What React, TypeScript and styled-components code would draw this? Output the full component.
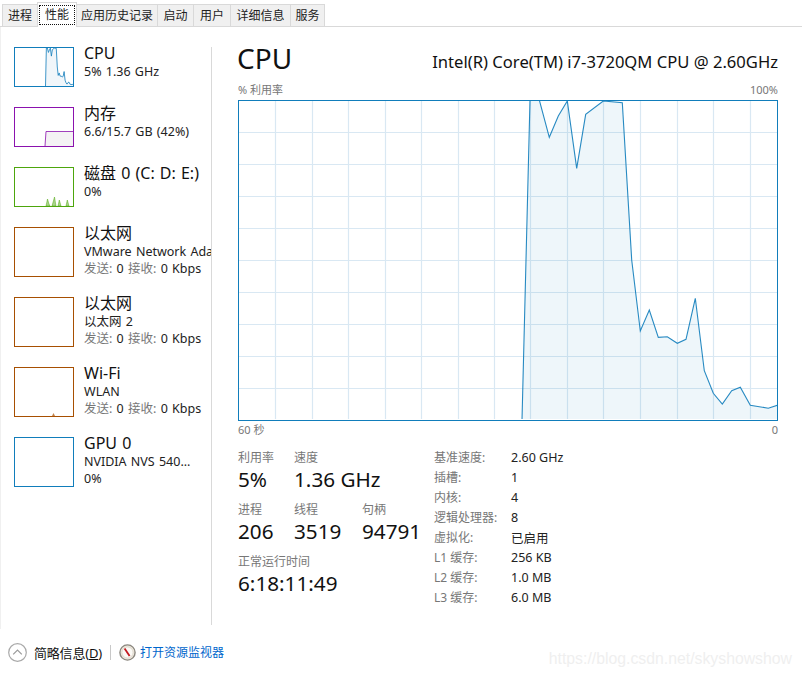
import styled, { createGlobalStyle } from "styled-components";

const FONT = `"Noto Sans", "Noto Sans CJK SC", sans-serif`;

const GlobalStyle = createGlobalStyle`
  html, body {
    margin: 0;
    padding: 0;
    background: #fff;
  }
  body {
    font-family: ${FONT};
    color: #111;
  }
`;

const CPU_POINTS: [number, number][] = [
  [522, 420], [530, 100], [539.3, 100], [549.3, 137.3], [558.3, 116], [567.3, 101],
  [576.7, 168.3], [585.7, 114.3], [603.3, 101], [622.3, 102.7], [631.7, 260], [640.3, 331],
  [649.3, 310], [658.3, 337.3], [667.3, 336.7], [677.3, 343.3], [686, 339.3], [695.3, 298.3],
  [704.3, 370.7], [713.3, 393.3], [722.3, 404], [731.7, 390.7], [740.3, 387.3], [750.3, 405.3],
  [759.3, 406.7], [768.3, 408.3], [777.3, 405.3],
];

const V_GRID = [275, 312, 348, 385, 421, 458, 494, 530, 567, 603, 640, 677, 713, 750];
const H_GRID = [132, 164, 196, 228, 260, 292, 324, 356, 388];

const TABS: [string, number][] = [
  ["进程", 36],
  ["性能", 40],
  ["应用历史记录", 82],
  ["启动", 37],
  ["用户", 38],
  ["详细信息", 61],
  ["服务", 35],
];

const toPoints = (pts: [number, number][]) => pts.map(([x, y]) => `${x},${y}`).join(" ");

const CpuChart = () => {
  const local: [number, number][] = CPU_POINTS.map(([x, y]) => [x - 239, y - 101]);
  const area: [number, number][] = [...local, [538.5, 319]];
  return (
    <svg width="538" height="318" viewBox="0 0 538 318">
      {V_GRID.map((x) => (
        <line key={x} x1={x - 238.5} x2={x - 238.5} y1={0} y2={318} stroke="#d9e8f3" strokeWidth={1.2} />
      ))}
      {H_GRID.map((y) => (
        <line key={y} y1={y - 100.5} y2={y - 100.5} x1={0} x2={538} stroke="#d9e8f3" strokeWidth={1.2} />
      ))}
      <polygon points={toPoints(area)} fill="#117dbb" fillOpacity={0.07} />
      <polyline points={toPoints(local)} fill="none" stroke="#117dbb" strokeOpacity={0.9} strokeWidth={1.1} />
    </svg>
  );
};

const MiniCpu = () => {
  const pts: [number, number][] = CPU_POINTS.map(([x, y]) => [
    ((x - 238) / 540) * 58,
    ((y - 100) / 320) * 38,
  ]);
  return (
    <svg width="58" height="38" viewBox="0 0 58 38">
      <polygon points={toPoints([...pts, [58, 38]])} fill="#f1f6fa" />
      <polyline points={toPoints(pts)} fill="none" stroke="#117dbb" strokeOpacity={0.8} strokeWidth={1} />
    </svg>
  );
};

const MiniMemory = () => (
  <svg width="58" height="38" viewBox="0 0 58 38">
    <polygon points="30,38 31,23.5 58,23.5 58,38" fill="#f4f2f4" />
    <polyline points="30,38 31,23.5 58,23.5" fill="none" stroke="#8b12ae" strokeOpacity={0.8} />
  </svg>
);

const DISK_SPIKES = [
  "31,38 32.5,31 34,36 35,38",
  "37,38 39.5,29 41,38",
  "43,38 44.3,32 46,38",
  "51,38 52.3,32 54,38",
];

const MiniDisk = () => (
  <svg width="58" height="38" viewBox="0 0 58 38">
    {DISK_SPIKES.map((p) => (
      <polygon key={p} points={p} fill="#a9d48b" stroke="#4da60c" strokeOpacity={0.6} strokeWidth={0.8} />
    ))}
  </svg>
);

const MiniWifi = () => (
  <svg width="58" height="48" viewBox="0 0 58 48">
    <polygon points="37,48 38.5,45 40,48" fill="#a74f01" fillOpacity={0.7} />
  </svg>
);

const ChevronIcon = () => (
  <svg width="19" height="19" viewBox="0 0 19 19">
    <circle cx="9.5" cy="9.5" r="8.8" fill="#fff" stroke="#a9a9a9" strokeWidth="1.2" />
    <polyline points="5.2,11.3 9.5,7 13.8,11.3" fill="none" stroke="#9a9a9a" strokeWidth="1.2" />
  </svg>
);

const GaugeIcon = () => (
  <svg width="17" height="17" viewBox="0 0 17 17">
    <circle cx="8.5" cy="8.5" r="7.6" fill="#efeade" stroke="#8a867e" strokeWidth="1.4" />
    <circle cx="8.5" cy="8.5" r="5.6" fill="#fbfaf6" stroke="#d8d2c6" strokeWidth="0.8" />
    <line x1="5.6" y1="4.4" x2="10.6" y2="12" stroke="#c3191f" strokeWidth="1.8" />
  </svg>
);

const INFO_ROWS: [string, string][] = [
  ["基准速度:", "2.60 GHz"],
  ["插槽:", "1"],
  ["内核:", "4"],
  ["逻辑处理器:", "8"],
  ["虚拟化:", "已启用"],
  ["L1 缓存:", "256 KB"],
  ["L2 缓存:", "1.0 MB"],
  ["L3 缓存:", "6.0 MB"],
];

const App = () => {
  return (
    <>
      <GlobalStyle />
      <Window>
        <TabBar>
          {TABS.map(([t, w], i) => (
            <Tab key={t} $active={i === 1} $width={w}>
              <TabLabel $active={i === 1}>{t}</TabLabel>
            </Tab>
          ))}
        </TabBar>
        <Body>
          <Sidebar>
            <Device>
              <Thumb $color="#117dbb"><MiniCpu /></Thumb>
              <DeviceText>
                <DeviceName>CPU</DeviceName>
                <DeviceLine>5% 1.36 GHz</DeviceLine>
              </DeviceText>
            </Device>
            <Device>
              <Thumb $color="#8b12ae"><MiniMemory /></Thumb>
              <DeviceText>
                <DeviceName>内存</DeviceName>
                <DeviceLine>6.6/15.7 GB (42%)</DeviceLine>
              </DeviceText>
            </Device>
            <Device>
              <Thumb $color="#4da60c"><MiniDisk /></Thumb>
              <DeviceText>
                <DeviceName>磁盘 0 (C: D: E:)</DeviceName>
                <DeviceLine>0%</DeviceLine>
              </DeviceText>
            </Device>
            <Device>
              <Thumb $color="#a74f01" $tall />
              <DeviceText>
                <DeviceName>以太网</DeviceName>
                <DeviceLine>VMware Network Adapter VMnet1</DeviceLine>
                <DeviceLine><Dim>发送:</Dim> 0 <Dim>接收:</Dim> 0 Kbps</DeviceLine>
              </DeviceText>
            </Device>
            <Device>
              <Thumb $color="#a74f01" $tall />
              <DeviceText>
                <DeviceName>以太网</DeviceName>
                <DeviceLine>以太网 2</DeviceLine>
                <DeviceLine><Dim>发送:</Dim> 0 <Dim>接收:</Dim> 0 Kbps</DeviceLine>
              </DeviceText>
            </Device>
            <Device>
              <Thumb $color="#a74f01" $tall><MiniWifi /></Thumb>
              <DeviceText>
                <DeviceName>Wi-Fi</DeviceName>
                <DeviceLine>WLAN</DeviceLine>
                <DeviceLine><Dim>发送:</Dim> 0 <Dim>接收:</Dim> 0 Kbps</DeviceLine>
              </DeviceText>
            </Device>
            <Device>
              <Thumb $color="#117dbb" $tall />
              <DeviceText>
                <DeviceName>GPU 0</DeviceName>
                <DeviceLine>NVIDIA NVS 540...</DeviceLine>
                <DeviceLine>0%</DeviceLine>
              </DeviceText>
            </Device>
          </Sidebar>
          <Content>
            <TitleRow>
              <Title>CPU</Title>
              <Model>Intel(R) Core(TM) i7-3720QM CPU @ 2.60GHz</Model>
            </TitleRow>
            <AxisRow>
              <span>% 利用率</span>
              <span>100%</span>
            </AxisRow>
            <ChartFrame><CpuChart /></ChartFrame>
            <AxisRow>
              <span>60 秒</span>
              <span>0</span>
            </AxisRow>
            <Stats>
              <StatsLeft>
                <StatRow>
                  <Stat $width={56}><StatLabel>利用率</StatLabel><StatValue>5%</StatValue></Stat>
                  <Stat><StatLabel>速度</StatLabel><StatValue>1.36 GHz</StatValue></Stat>
                </StatRow>
                <StatRow>
                  <Stat $width={56}><StatLabel>进程</StatLabel><StatValue>206</StatValue></Stat>
                  <Stat $width={68}><StatLabel>线程</StatLabel><StatValue>3519</StatValue></Stat>
                  <Stat><StatLabel>句柄</StatLabel><StatValue>94791</StatValue></Stat>
                </StatRow>
                <StatRow>
                  <Stat><StatLabel>正常运行时间</StatLabel><StatValue>6:18:11:49</StatValue></Stat>
                </StatRow>
              </StatsLeft>
              <InfoTable>
                {INFO_ROWS.map(([k, v]) => (
                  <InfoRow key={k}>
                    <InfoKey>{k}</InfoKey>
                    <span>{v}</span>
                  </InfoRow>
                ))}
              </InfoTable>
            </Stats>
          </Content>
        </Body>
        <Footer>
          <ChevronIcon />
          <FooterLabel>简略信息(<u>D</u>)</FooterLabel>
          <FooterSep />
          <GaugeIcon />
          <FooterLink>打开资源监视器</FooterLink>
          <Watermark>https://blog.csdn.net/skyshowshow</Watermark>
        </Footer>
      </Window>
    </>
  );
};

const Window = styled.div`
  width: 802px;
  height: 677px;
  display: flex;
  flex-direction: column;
  overflow: hidden;
`;

const TabBar = styled.div`
  height: 26px;
  padding-left: 2px;
  display: flex;
  align-items: flex-end;
  border-bottom: 1px solid #d9d9d9;
`;

const Tab = styled.div<{ $active?: boolean; $width: number }>`
  box-sizing: border-box;
  flex: none;
  width: ${(p) => p.$width}px;
  height: ${(p) => (p.$active ? "25px" : "22px")};
  margin-bottom: ${(p) => (p.$active ? "-1px" : "0")};
  margin-right: -1px;
  display: flex;
  align-items: center;
  justify-content: center;
  font-size: 12px;
  color: #222;
  background: ${(p) => (p.$active ? "#fff" : "#f0f0f0")};
  border: 1px solid #d9d9d9;
  border-bottom: none;
  position: relative;
  z-index: ${(p) => (p.$active ? 1 : 0)};
`;

const TabLabel = styled.span<{ $active?: boolean }>`
  padding: 0 ${(p) => (p.$active ? "5px" : "0")};
  line-height: 18px;
  outline: ${(p) => (p.$active ? "1px dotted #111" : "none")};
`;

const Body = styled.div`
  height: 602px;
  display: flex;
`;

const Sidebar = styled.aside`
  box-sizing: border-box;
  width: 212px;
  padding: 20px 0 0 13px;
  display: flex;
  flex-direction: column;
  gap: 20px;
  border-left: 1px solid #f0f0f0;
  position: relative;
  overflow: hidden;
  &::after {
    content: "";
    position: absolute;
    right: 0;
    top: 20px;
    bottom: 4px;
    width: 1px;
    background: #d9d9d9;
  }
`;

const Device = styled.div`
  display: flex;
  gap: 10px;
  white-space: nowrap;
`;

const Thumb = styled.div<{ $color: string; $tall?: boolean }>`
  box-sizing: border-box;
  flex: none;
  width: 60px;
  height: ${(p) => (p.$tall ? "50px" : "40px")};
  border: 1px solid ${(p) => p.$color};
  display: flex;
  svg {
    display: block;
  }
`;

const DeviceText = styled.div`
  margin-top: -4px;
  min-width: 0;
`;

const DeviceName = styled.div`
  font-size: 16px;
  line-height: 20px;
  word-spacing: 1px;
  color: #111;
`;

const DeviceLine = styled.div`
  font-size: 12.5px;
  line-height: 17px;
  word-spacing: 1px;
  color: #222;
`;

const Dim = styled.span`
  color: #777;
`;

const Content = styled.main`
  flex: 1;
  padding: 16px 24px 0 26px;
  min-width: 0;
`;

const TitleRow = styled.div`
  height: 38px;
  display: flex;
  justify-content: space-between;
  align-items: flex-start;
`;

const Title = styled.div`
  font-size: 28px;
  line-height: 30px;
  margin-left: -1px;
  color: #111;
`;

const Model = styled.div`
  margin-top: 9px;
  font-size: 16.6px;
  line-height: 20px;
  color: #111;
`;

const AxisRow = styled.div`
  display: flex;
  justify-content: space-between;
  font-size: 11px;
  line-height: 17px;
  height: 19px;
  color: #777;
`;

const ChartFrame = styled.div`
  box-sizing: border-box;
  width: 540px;
  height: 321px;
  border: 1px solid #117dbb;
  svg {
    display: block;
  }
`;

const Stats = styled.div`
  margin-top: 7px;
  display: flex;
`;

const StatsLeft = styled.div`
  width: 196px;
  padding-top: 2px;
  display: flex;
  flex-direction: column;
  gap: 8px;
`;

const StatRow = styled.div`
  display: flex;
`;

const Stat = styled.div<{ $width?: number }>`
  width: ${(p) => (p.$width ? `${p.$width}px` : "auto")};
  white-space: nowrap;
`;

const StatLabel = styled.div`
  font-size: 12px;
  line-height: 18px;
  margin-bottom: -1px;
  color: #777;
`;

const StatValue = styled.div`
  font-size: 20.7px;
  line-height: 27px;
  color: #111;
`;

const InfoTable = styled.div`
  display: flex;
  flex-direction: column;
`;

const InfoRow = styled.div`
  height: 20px;
  display: flex;
  align-items: center;
  font-size: 12.5px;
  color: #222;
`;

const InfoKey = styled.span`
  width: 77px;
  font-size: 12px;
  color: #777;
`;

const Footer = styled.footer`
  flex: 1;
  padding: 0 0 2px 8px;
  display: flex;
  align-items: center;
  position: relative;
`;

const FooterLabel = styled.span`
  margin-left: 7px;
  font-size: 13px;
  letter-spacing: -0.2px;
  color: #111;
`;

const FooterSep = styled.span`
  width: 1px;
  height: 15px;
  margin: 0 8px 0 8px;
  background: #c8c8c8;
`;

const FooterLink = styled.a`
  margin-left: 4px;
  font-size: 12px;
  color: #0066cc;
`;

const Watermark = styled.span`
  position: absolute;
  right: 10px;
  top: 21px;
  font-family: "Liberation Sans", sans-serif;
  font-size: 15.8px;
  color: #efefef;
`;

export default App;
